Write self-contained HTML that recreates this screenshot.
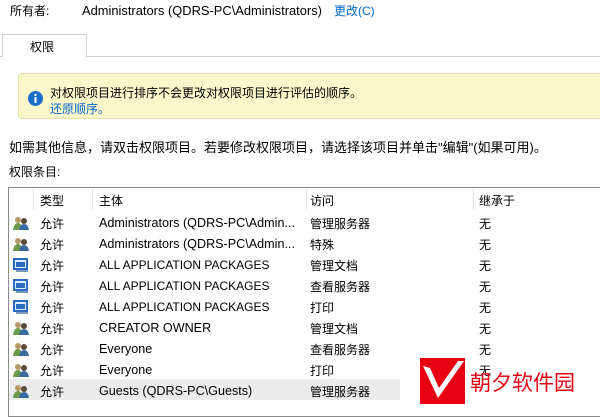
<!DOCTYPE html><html><head><meta charset="utf-8"><style>
*{margin:0;padding:0;box-sizing:border-box}
body{width:600px;height:406px;overflow:hidden;background:#fff;font-family:"Liberation Sans","Noto Sans CJK SC",sans-serif;font-size:12px;color:#000;position:relative}
.a{position:absolute;white-space:nowrap}
.row{position:absolute;left:9px;width:600px;height:21px}
.row span{position:absolute;top:3px}
.row span.l{font-size:12.6px;top:4px;line-height:15px}
.ic{position:absolute;left:4px;top:3px;width:16px;height:15px}
</style></head><body>
<div class="a" style="left:10px;top:2px">所有者:</div>
<div class="a" style="left:82px;top:3px;font-size:12.9px;line-height:15px">Administrators (QDRS-PC\Administrators)</div>
<div class="a" style="left:334px;top:2px;color:#0066cc">更改(C)</div>
<div class="a" style="left:0;top:56px;width:600px;border-top:1px solid #d0d0d0"></div>
<div class="a" style="left:2px;top:34px;width:85px;height:23px;border:1px solid #d0d0d0;border-bottom:none;background:#fff"></div>
<div class="a" style="left:30px;top:38px">权限</div>
<div class="a" style="left:18px;top:73px;width:590px;height:46px;background:#fcf8cc;border:1px solid #e6e0a6;border-radius:3px"></div>
<svg class="a" style="left:28px;top:91px" width="15" height="15"><circle cx="7.5" cy="7.5" r="7.5" fill="#1a6fc9"/><rect x="6.5" y="6" width="2" height="6" fill="#fff"/><circle cx="7.5" cy="4" r="1.2" fill="#fff"/></svg>
<div class="a" style="left:50px;top:84px">对权限项目进行排序不会更改对权限项目进行评估的顺序。</div>
<div class="a" style="left:50px;top:100px;color:#0066cc">还原顺序。</div>
<div class="a" style="left:9px;top:137px;font-size:13px">如需其他信息，请双击权限项目。若要修改权限项目，请选择该项目并单击"编辑"(如果可用)。</div>
<div class="a" style="left:9px;top:163px">权限条目:</div>
<div class="a" style="left:8px;top:187px;width:600px;height:230px;border:1px solid #8a8a8a;border-right:none"></div>
<div class="a" style="left:33px;top:189px;height:21px;border-left:1px solid #e5e5e5"></div>
<div class="a" style="left:92px;top:189px;height:21px;border-left:1px solid #e5e5e5"></div>
<div class="a" style="left:306px;top:189px;height:21px;border-left:1px solid #e5e5e5"></div>
<div class="a" style="left:473px;top:189px;height:21px;border-left:1px solid #e5e5e5"></div>
<div class="a" style="left:40px;top:192px">类型</div>
<div class="a" style="left:99px;top:192px">主体</div>
<div class="a" style="left:310px;top:192px">访问</div>
<div class="a" style="left:479px;top:192px">继承于</div>
<div class="a" style="left:9px;top:379px;width:391px;height:21px;background:#ececec"></div>
<svg width="0" height="0" style="position:absolute"><defs>
<g id="u"><circle cx="5" cy="5" r="3" fill="#b89a6a"/><path d="M0 15 Q1 8 5 8 Q9 8 9 15Z" fill="#6a9a4a"/><circle cx="11" cy="6" r="3" fill="#5a4a3a"/><path d="M6 15 Q7 9 11 9 Q15 9 16 15Z" fill="#3a6aa0"/></g>
<g id="p"><rect x="0" y="1" width="15" height="12" fill="#2b6cc0"/><rect x="2" y="3" width="11" height="8" fill="#dfeeff"/><rect x="3" y="5" width="9" height="5" fill="#2b6cc0"/><rect x="3" y="13" width="12" height="2" fill="#7a9ac0"/></g>
</defs></svg>
<div class="a" style="left:0;top:0">
<div class="row" style="top:212px"><svg class="ic"><use href="#u"/></svg><span style="left:31px">允许</span><span class="l" style="left:90px">Administrators (QDRS-PC\Admin...</span><span style="left:301px">管理服务器</span><span style="left:470px">无</span></div>
<div class="row" style="top:233px"><svg class="ic"><use href="#u"/></svg><span style="left:31px">允许</span><span class="l" style="left:90px">Administrators (QDRS-PC\Admin...</span><span style="left:301px">特殊</span><span style="left:470px">无</span></div>
<div class="row" style="top:254px"><svg class="ic"><use href="#p"/></svg><span style="left:31px">允许</span><span class="l" style="left:90px;font-size:12px">ALL APPLICATION PACKAGES</span><span style="left:301px">管理文档</span><span style="left:470px">无</span></div>
<div class="row" style="top:275px"><svg class="ic"><use href="#p"/></svg><span style="left:31px">允许</span><span class="l" style="left:90px;font-size:12px">ALL APPLICATION PACKAGES</span><span style="left:301px">查看服务器</span><span style="left:470px">无</span></div>
<div class="row" style="top:296px"><svg class="ic"><use href="#p"/></svg><span style="left:31px">允许</span><span class="l" style="left:90px;font-size:12px">ALL APPLICATION PACKAGES</span><span style="left:301px">打印</span><span style="left:470px">无</span></div>
<div class="row" style="top:317px"><svg class="ic"><use href="#u"/></svg><span style="left:31px">允许</span><span class="l" style="left:90px">CREATOR OWNER</span><span style="left:301px">管理文档</span><span style="left:470px">无</span></div>
<div class="row" style="top:338px"><svg class="ic"><use href="#u"/></svg><span style="left:31px">允许</span><span class="l" style="left:90px">Everyone</span><span style="left:301px">查看服务器</span><span style="left:470px">无</span></div>
<div class="row" style="top:359px"><svg class="ic"><use href="#u"/></svg><span style="left:31px">允许</span><span class="l" style="left:90px">Everyone</span><span style="left:301px">打印</span><span style="left:470px">无</span></div>
<div class="row" style="top:380px"><svg class="ic"><use href="#u"/></svg><span style="left:31px">允许</span><span class="l" style="left:90px">Guests (QDRS-PC\Guests)</span><span style="left:301px">管理服务器</span></div>
</div>
<svg class="a" style="left:420px;top:358px" width="45" height="46"><rect width="45" height="46" fill="#e60012"/><path d="M3 8 L18 40 L44 3 L38 3 L19 30 L10 10Z" fill="#fff"/></svg>
<div class="a" style="left:470px;top:367px;color:#e60012;font-size:21px;font-family:'Noto Sans CJK SC',sans-serif">朝夕软件园</div>
</body></html>
